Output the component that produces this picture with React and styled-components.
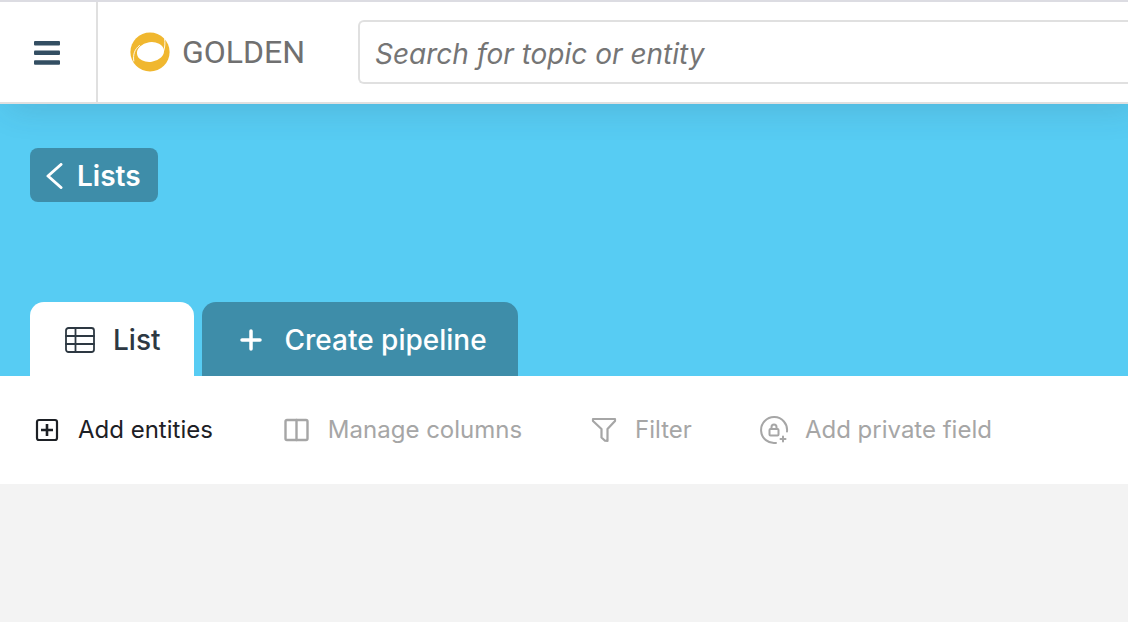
import React from "react";
import styled, { createGlobalStyle } from "styled-components";

const GlobalStyle = createGlobalStyle`
  * { box-sizing: border-box; }
  body {
    margin: 0;
    background: #f3f3f3;
    font-family: Inter, "Liberation Sans", sans-serif;
    overflow-x: hidden;
  }
  button, input { font-family: inherit; }
`;

const Header = styled.header`
  position: relative;
  display: flex;
  align-items: stretch;
  height: 104px;
  background: #fff;
  border-top: 2px solid #dcdce2;
  border-bottom: 2px solid #e0e0e0;
  box-shadow: 8px 4px 32px rgba(50, 60, 80, 0.16);
`;

const MenuButton = styled.button`
  flex: none;
  display: flex;
  align-items: center;
  width: 98px;
  padding: 2px 0 0 34px;
  border: 0;
  border-right: 2px solid #e0e0e0;
  background: none;
`;

const LogoLink = styled.a`
  flex: none;
  display: flex;
  align-items: center;
  gap: 12px;
  width: 260px;
  padding-left: 32px;
  color: #707070;
  text-decoration: none;
`;

const Wordmark = styled.span`
  font: 400 32px/40px Roboto, sans-serif;
`;

const Search = styled.input`
  flex: 1;
  min-width: 0;
  height: 64px;
  margin-top: 18px;
  padding: 4px 15px 0;
  border: 2px solid #e0e0e0;
  border-right: 0;
  border-radius: 6px 0 0 6px;
  background: #fff;
  color: #222;
  font-size: 28px;
  font-style: italic;
  outline: 0;
  &::placeholder { color: #757575; opacity: 1; }
`;

const Hero = styled.section`
  display: flex;
  flex-direction: column;
  align-items: flex-start;
  justify-content: space-between;
  height: 272px;
  padding: 44px 30px 0;
  background: #57ccf3;
`;

const BackLink = styled.a`
  display: flex;
  align-items: center;
  gap: 14px;
  height: 54px;
  padding: 2px 17px 0 16px;
  border-radius: 8px;
  background: #3e8da9;
  color: #fff;
  font-size: 28px;
  font-weight: 600;
  line-height: 36px;
  text-decoration: none;
`;

const Tabs = styled.nav`
  display: flex;
  gap: 8px;
`;

const Tab = styled.button`
  display: flex;
  align-items: center;
  gap: ${(p) => (p.$active ? 18 : 23)}px;
  height: 74px;
  padding: 2px ${(p) => (p.$active ? "33px 0 35px" : "31px 0 38px")};
  border: 0;
  border-radius: 14px 14px 0 0;
  background: ${(p) => (p.$active ? "#fff" : "#3e8da9")};
  color: ${(p) => (p.$active ? "#2d3842" : "#fff")};
  font-size: 28px;
  font-weight: 500;
  line-height: 36px;
`;

const Toolbar = styled.div`
  display: flex;
  align-items: center;
  gap: 69px;
  height: 108px;
  padding: 0 34px;
  background: #fff;
`;

const Action = styled.button`
  flex: none;
  display: flex;
  align-items: center;
  gap: 18px;
  padding: 0;
  border: 0;
  background: none;
  color: ${(p) => (p.disabled ? "#a6a6a6" : "#1d2025")};
  font-size: 24px;
  line-height: 32px;
  white-space: nowrap;
`;

const Icon = styled.svg.attrs({ "aria-hidden": true })`
  flex: none;
  display: block;
  fill: none;
  stroke: currentColor;
  stroke-linecap: round;
  stroke-linejoin: round;
`;

export default function App() {
  return (
    <>
      <GlobalStyle />
      <Header>
        <MenuButton aria-label="Menu">
          <Icon width="26" height="24" viewBox="0 0 26 24">
            <g fill="#334e62" stroke="none">
              <rect y="0" width="26" height="4.5" rx="1" />
              <rect y="9.6" width="26" height="4.5" rx="1" />
              <rect y="19.2" width="26" height="4.5" rx="1" />
            </g>
          </Icon>
        </MenuButton>
        <LogoLink href="#" aria-label="Golden">
          <Icon width="40" height="40" viewBox="0 0 40 40">
            <circle cx="20" cy="20" r="19.600" fill="#f0b72f" stroke="none" />
            <ellipse cx="20.500" cy="20" rx="13.600" ry="9.900" fill="#fff" stroke="none" transform="rotate(-8 20.500 20)" />
            <path stroke="#fff" strokeWidth="0.900" d="M34.600 6.500C35.200 11 35 15 33.700 18.800M9.500 13.500C4.500 17 2.800 23 3.800 29" />
          </Icon>
          <Wordmark>GOLDEN</Wordmark>
        </LogoLink>
        <Search type="search" aria-label="Search" placeholder="Search for topic or entity" />
      </Header>
      <main>
        <Hero>
          <BackLink href="#">
            <Icon width="17" height="26" viewBox="0 0 17 26" strokeWidth="3">
              <path d="M15 1.500 2 13 15 24.500" />
            </Icon>
            Lists
          </BackLink>
          <Tabs aria-label="List views">
            <Tab $active>
              <Icon width="30" height="26" viewBox="0 0 30 26" strokeWidth="1.800">
                <rect x="1" y="1" width="28" height="24" rx="2.500" />
                <path d="M1 9H29M1 17H29M10.500 1V25" />
              </Icon>
              List
            </Tab>
            <Tab>
              <Icon width="22" height="22" viewBox="0 0 22 22" strokeWidth="3.500">
                <path d="M2 11H20M11 2V20" />
              </Icon>
              Create pipeline
            </Tab>
          </Tabs>
        </Hero>
        <Toolbar role="toolbar" aria-label="List actions">
          <Action>
            <Icon width="26" height="24" viewBox="0 0 26 24" strokeWidth="2.200">
              <rect x="3" y="2" width="20" height="20" rx="2" />
              <path strokeWidth="2.600" strokeLinecap="butt" d="M7 12H19M13 6V18" />
            </Icon>
            Add entities
          </Action>
          <Action disabled>
            <Icon width="28" height="24" viewBox="0 0 28 24" strokeWidth="2.400">
              <rect x="3.500" y="2" width="22" height="20" rx="1.500" />
              <path d="M14.500 2V22" />
            </Icon>
            Manage columns
          </Action>
          <Action disabled>
            <Icon width="26" height="26" viewBox="0 0 26 26" strokeWidth="2.200">
              <path d="M2 2H24V4L16.500 12V24L14 23.700 10.500 20.500V12L2 4Z" />
            </Icon>
            Filter
          </Action>
          <Action disabled>
            <Icon width="26" height="28" viewBox="1 0 26 28" strokeWidth="2" overflow="visible">
              <path d="M16 26.900A13 13 0 1 1 27 15.500" />
              <rect x="9.500" y="13" width="9" height="6.500" rx="1" />
              <path d="M11.500 13V11A2.500 2.500 0 0 1 16.500 11V13M20.500 23H25.500M23 20.500V25.500" />
            </Icon>
            Add private field
          </Action>
        </Toolbar>
      </main>
    </>
  );
}
